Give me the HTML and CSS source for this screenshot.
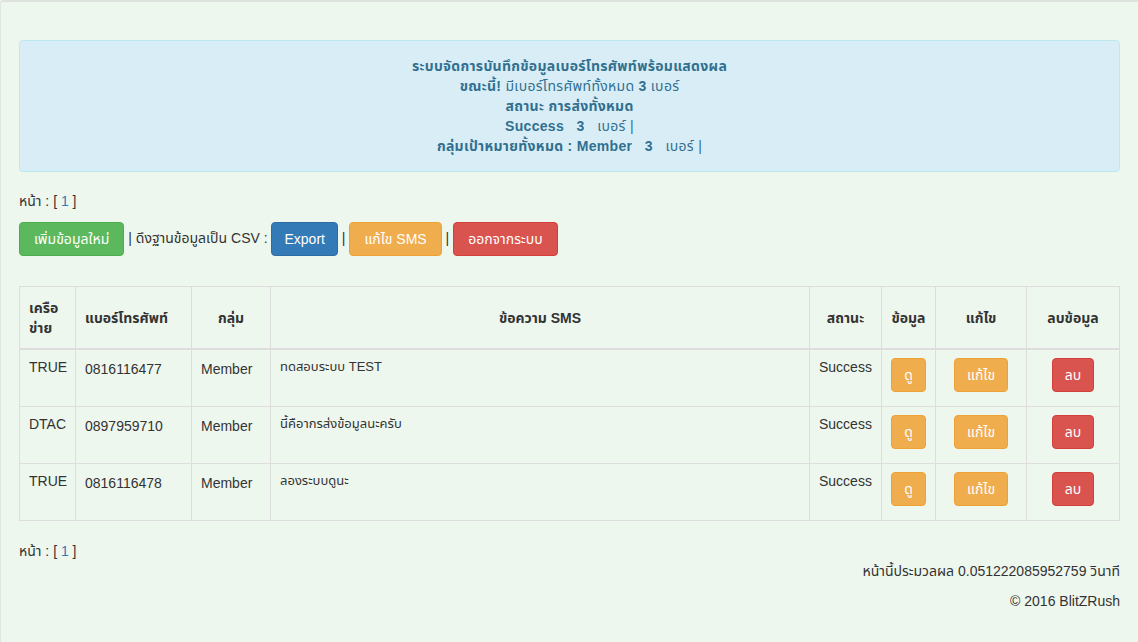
FILE: index.html
```html
<!DOCTYPE html>
<html lang="th">
<head>
<meta charset="utf-8">
<title>ระบบจัดการบันทึกข้อมูลเบอร์โทรศัพท์</title>
<link rel="stylesheet" href="styles.css">
</head>
<body>
<div class="page">
  <div class="alert">
    ระบบจัดการบันทึกข้อมูลเบอร์โทรศัพท์พร้อมแสดงผล<br>
    ขณะนี้! <span class="normal">มีเบอร์โทรศัพท์ทั้งหมด</span> 3 <span class="normal">เบอร์</span><br>
    สถานะ การส่งทั้งหมด<br>
    Success &nbsp; 3 &nbsp; <span class="normal">เบอร์ |</span><br>
    กลุ่มเป้าหมายทั้งหมด : Member &nbsp; 3 &nbsp; <span class="normal">เบอร์ |</span>
  </div>

  <p class="pager">หน้า : [ <a href="#">1</a> ]</p>

  <div class="toolbar">
    <a class="btn btn-success" href="#">เพิ่มข้อมูลใหม่</a> | ดึงฐานข้อมูลเป็น CSV : <a class="btn btn-primary" href="#">Export</a> | <a class="btn btn-warning" href="#">แก้ไข SMS</a> | <a class="btn btn-danger" href="#">ออกจากระบบ</a>
  </div>

  <table class="table">
    <colgroup>
      <col class="c1"><col class="c2"><col class="c3"><col class="c4"><col class="c5"><col class="c6"><col class="c7"><col class="c8">
    </colgroup>
    <thead>
      <tr>
        <th class="left">เครือ<br>ข่าย</th>
        <th class="left">แบอร์โทรศัพท์</th>
        <th>กลุ่ม</th>
        <th>ข้อความ SMS</th>
        <th>สถานะ</th>
        <th>ข้อมูล</th>
        <th>แก้ไข</th>
        <th>ลบข้อมูล</th>
      </tr>
    </thead>
    <tbody>
      <tr>
        <td>TRUE</td>
        <td class="num">0816116477</td>
        <td class="num">Member</td>
        <td class="msg">ทดสอบระบบ TEST</td>
        <td>Success</td>
        <td class="center"><a class="btn btn-warning btn-b" href="#">ดู</a></td>
        <td class="center"><a class="btn btn-warning btn-b" href="#">แก้ไข</a></td>
        <td class="center"><a class="btn btn-danger btn-b" href="#">ลบ</a></td>
      </tr>
      <tr>
        <td>DTAC</td>
        <td class="num">0897959710</td>
        <td class="num">Member</td>
        <td class="msg">นี้คือากรส่งข้อมูลนะครับ</td>
        <td>Success</td>
        <td class="center"><a class="btn btn-warning btn-b" href="#">ดู</a></td>
        <td class="center"><a class="btn btn-warning btn-b" href="#">แก้ไข</a></td>
        <td class="center"><a class="btn btn-danger btn-b" href="#">ลบ</a></td>
      </tr>
      <tr>
        <td>TRUE</td>
        <td class="num">0816116478</td>
        <td class="num">Member</td>
        <td class="msg">ลองระบบดูนะ</td>
        <td>Success</td>
        <td class="center"><a class="btn btn-warning btn-b" href="#">ดู</a></td>
        <td class="center"><a class="btn btn-warning btn-b" href="#">แก้ไข</a></td>
        <td class="center"><a class="btn btn-danger btn-b" href="#">ลบ</a></td>
      </tr>
    </tbody>
  </table>

  <p class="pager bottom">หน้า : [ <a href="#">1</a> ]</p>

  <div class="footer">
    <p>หน้านี้ประมวลผล 0.051222085952759 วินาที</p>
    <p>© 2016 BlitZRush</p>
  </div>
</div>
</body>
</html>
```

FILE: styles.css
```css
html, body {
  margin: 0;
  padding: 0;
  height: 100%;
}
body {
  background: #eef7ee;
  font-family: "Liberation Sans", Arial, "Noto Sans Thai", Tahoma, sans-serif;
  font-size: 14px;
  line-height: 20px;
  color: #333;
}
.page {
  box-sizing: border-box;
  min-height: 642px;
  border-top: 2px solid #dfe3df;
  border-left: 1px solid #e2e6e2;
  border-radius: 4px 0 0 0;
  padding: 38px 18px 20px 18px;
}
a {
  color: #337ab7;
  text-decoration: none;
}
.alert {
  background: #d9edf7;
  border: 1px solid #bce8f1;
  border-radius: 4px;
  color: #31708f;
  font-weight: bold;
  text-align: center;
  padding: 15px;
  line-height: 20px;
  letter-spacing: 0.3px;
}
.alert .normal {
  font-weight: normal;
}
.pager {
  margin: 19px 0 0 0;
  line-height: 20px;
}
.toolbar {
  margin-top: 10px;
  line-height: 34px;
}
.btn {
  display: inline-block;
  box-sizing: border-box;
  height: 34px;
  padding: 6px 12px;
  font-size: 14px;
  line-height: 20px;
  border: 1px solid transparent;
  border-radius: 4px;
  color: #fff;
  text-align: center;
  vertical-align: middle;
}
.toolbar .btn {
  padding: 6px 14px;
}
.btn-success { background: #5cb85c; border-color: #4cae4c; }
.btn-primary { background: #337ab7; border-color: #2e6da4; }
.btn-warning { background: #f0ad4e; border-color: #eea236; }
.btn-danger  { background: #d9534f; border-color: #d43f3a; }
.toolbar .btn-primary {
  padding: 6px 12px;
}
.btn-b {
  vertical-align: top;
}
.table {
  width: 100%;
  margin-top: 30px;
  border-collapse: collapse;
  table-layout: fixed;
  border: 1px solid #ddd;
}
.c1 { width: 56px; }
.c2 { width: 116px; }
.c3 { width: 79px; }
.c4 { width: 539px; }
.c5 { width: 72px; }
.c6 { width: 54px; }
.c7 { width: 91px; }
.c8 { width: 93px; }
.table th,
.table td {
  border: 1px solid #ddd;
  padding: 8px 9px;
  line-height: 20px;
}
.table th {
  height: 45px;
  text-align: center;
  vertical-align: middle;
  border-bottom: 2px solid #ddd;
}
.table th.left {
  text-align: left;
}
.table td {
  height: 39px;
  vertical-align: top;
  padding-top: 7px;
}
.table td.num {
  padding-top: 9px;
}
.table td.msg {
  font-size: 13px;
}
.table td.center {
  text-align: center;
  padding-top: 8px;
  height: 38px;
}
.pager.bottom {
  margin-top: 20px;
}
.footer {
  text-align: right;
}
.footer p {
  margin: 0;
  line-height: 20px;
}
.footer p + p {
  margin-top: 10px;
}
```
